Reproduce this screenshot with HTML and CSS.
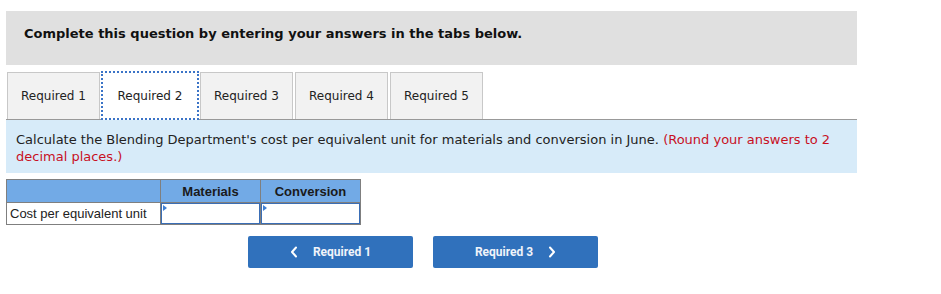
FILE: index.html
```html
<!DOCTYPE html>
<html lang="en">
<head>
<meta charset="UTF-8">
<title>Required 2</title>
<link rel="stylesheet" href="styles.css">
</head>
<body>

<div class="page">
    <div class="instructions">
        <strong>Complete this question by entering your answers in the tabs below.</strong>
    </div>

    <div class="tabs">
        <div class="tab">Required 1</div>
        <div class="tab active">Required 2</div>
        <div class="tab">Required 3</div>
        <div class="tab">Required 4</div>
        <div class="tab">Required 5</div>
    </div>

    <div class="question">
        Calculate the Blending Department's cost per equivalent unit for materials and conversion in June.
        <span class="hint">(Round your answers to 2 decimal places.)</span>
    </div>

    <table class="answer">
        <tr>
            <th class="blank"></th>
            <th>Materials</th>
            <th>Conversion</th>
        </tr>
        <tr>
            <td class="label">Cost per equivalent unit</td>
            <td class="cell"><span class="field"></span></td>
            <td class="cell"><span class="field"></span></td>
        </tr>
    </table>

    <div class="nav">
        <button class="btn-nav">
            <svg class="chev" width="8" height="12" viewBox="0 0 8 12"><path d="M6 1.5 L2 6 L6 10.5" fill="none" stroke="#fff" stroke-width="2" stroke-linecap="round" stroke-linejoin="round"/></svg>
            <span>Required 1</span>
        </button>
        <button class="btn-nav">
            <span>Required 3</span>
            <svg class="chev" width="8" height="12" viewBox="0 0 8 12"><path d="M2 1.5 L6 6 L2 10.5" fill="none" stroke="#fff" stroke-width="2" stroke-linecap="round" stroke-linejoin="round"/></svg>
        </button>
    </div>
</div>

</body>
</html>
```

FILE: styles.css
```css
body {
    margin: 0;
    background-color: #fff;
    font-family: Verdana, "DejaVu Sans", sans-serif;
    color: #111;
}

.page {
    width: 851px;
    padding: 11px 0 0 6px;
}

.instructions {
    height: 54px;
    box-sizing: border-box;
    padding: 15px 0 0 18px;
    background-color: #e0e0e0;
    font-size: 13px;
}

.tabs {
    display: flex;
    gap: 2px;
    margin-top: 7px;
    padding-left: 1px;
    border-bottom: 1px solid #999;
}

.tab {
    width: 93px;
    height: 47px;
    box-sizing: border-box;
    display: flex;
    align-items: center;
    justify-content: center;
    background-color: #f2f2f2;
    border: 1px solid #c8c8c8;
    border-bottom: none;
    font-size: 12px;
    color: #222;
}

.tab.active {
    width: 98px;
    height: 49px;
    margin: -1px -1px -1px -1px;
    background-color: #fff;
    border: 2px dotted #3b74c7;
}

.question {
    padding: 11px 10px 8px 10px;
    background-color: #d7ebf9;
    font-size: 13px;
    line-height: 17px;
    color: #222;
}

.hint {
    color: #c8101f;
}

.answer {
    margin-top: 6px;
    border-collapse: collapse;
    font-family: Arial, "Liberation Sans", sans-serif;
    font-size: 13px;
    color: #222;
}

.answer th {
    width: 99px;
    height: 22px;
    padding: 0;
    background-color: #72aae6;
    border: 1px solid #7f7f7f;
    font-weight: bold;
    color: #1a1a1a;
}

.answer th.blank {
    width: 153px;
}

.answer td {
    height: 21px;
    padding: 0;
    border: 1px solid #7f7f7f;
}

.answer td.label {
    padding-left: 3px;
    text-align: left;
}

.cell {
    position: relative;
}

.field {
    display: block;
    height: 19px;
    border: 1px solid #3a6eb6;
    background-color: #fff;
}

.field::before {
    content: "";
    position: absolute;
    top: 2px;
    left: 2px;
    border-top: 3px solid transparent;
    border-bottom: 3px solid transparent;
    border-left: 4px solid #3d7fd6;
}

.nav {
    display: flex;
    gap: 20px;
    margin-top: 11px;
    padding-left: 242px;
}

.btn-nav {
    width: 165px;
    height: 32px;
    display: flex;
    align-items: center;
    justify-content: center;
    gap: 15px;
    background-color: #3071bc;
    border: none;
    border-radius: 2px;
    color: #f0f4fa;
    font-family: Roboto, "Liberation Sans", sans-serif;
    font-size: 12px;
    font-weight: bold;
    cursor: pointer;
}
```
